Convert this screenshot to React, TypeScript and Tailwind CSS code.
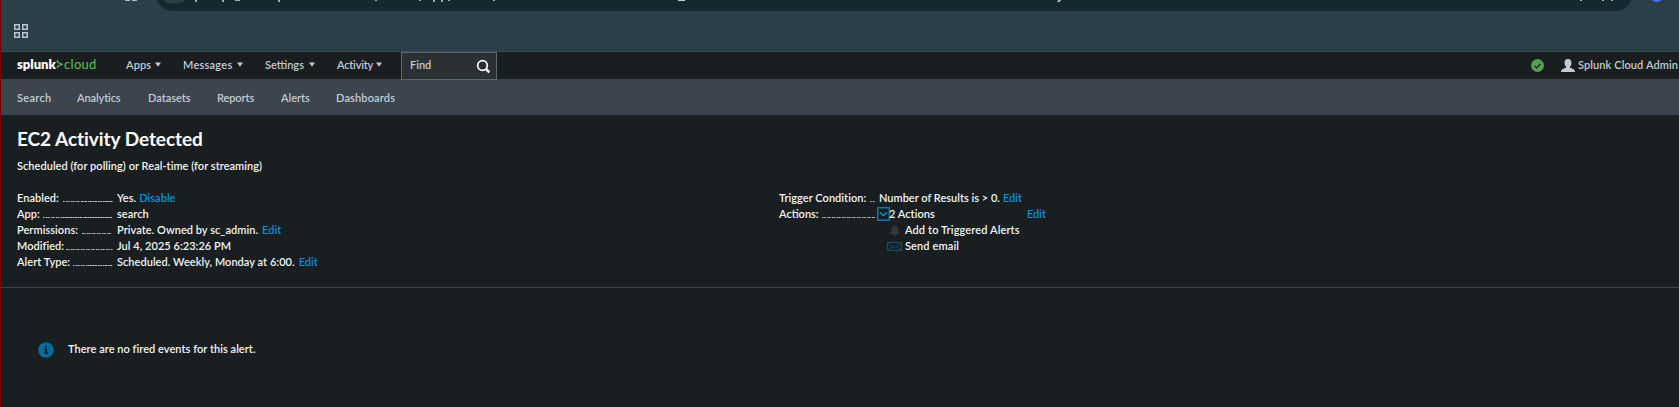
import React from "react";

const fragments: [number, number, number][] = [
  [195, 2, 2], [222, 2, 2], [235, 5, 1], [278, 2, 2], [375, 2, 1], [419, 2, 1], [433, 2, 2],
  [441, 2, 2], [448, 2, 1], [493, 2, 1], [1580, 2, 1], [1602, 2, 1], [1611, 2, 1],
];

function Caret() {
  return <svg className="h-[5px] w-[6px]" viewBox="0 0 6 5"><path d="M0 .5h6L3 4.700z" fill="#c3cbd4" /></svg>;
}

function MenuItem({ label, className }: { label: string; className: string }) {
  return (
    <div className={`flex shrink-0 items-center justify-between whitespace-nowrap ${className}`}>
      <span>{label}</span>
      <Caret />
    </div>
  );
}

function Row({ label, labelClass, dots, children }: { label: string; labelClass: string; dots: string; children: React.ReactNode }) {
  return (
    <div className="flex h-4 items-center whitespace-nowrap">
      <div className="flex w-[100px] shrink-0 items-center">
        <span className={labelClass}>{label}</span>
        <span className={`ml-[3px] mt-[7px] h-px bg-[repeating-linear-gradient(90deg,#c8cacc_0_1px,#70757a_1px_2px,#3a3f43_2px_2.5px)] ${dots}`} />
      </div>
      {children}
    </div>
  );
}

function Link({ children, className = "" }: { children: string; className?: string }) {
  return <a className={`text-[#0f8fdc] ${className}`}>{children}</a>;
}

export default function App() {
  return (
    <div className="h-[407px] w-[1679px] overflow-hidden border-l border-[#7a0000] bg-[#191e21] font-['Lato',sans-serif] text-[11px] font-semibold leading-4 text-[#f2f4f5]">
      <div className="h-[52px] border-b border-[#3b4a50] bg-[#2c3e47]">
        <svg className="block h-[51px] w-[1678px]" viewBox="1 0 1678 51">
          <path d="M157 0C160 7 166 11 174 11H1615C1623 11 1629 6 1631 0Z" fill="#152830" />
          <path d="M163 0a12 6 0 0 0 22 0z" fill="#2c3e47" />
          <path d="M125 0h5v1h-5zM132 0h5v1h-5z" fill="#a8c0cc" />
          {fragments.map(([x, w, h]) => <rect key={x} x={x} y="0" width={w} height={h} fill="#9fadb5" />)}
          <rect x="678" y="0" width="7" height="1" fill="#c3cbd4" />
          <path d="M1058 0h3v1h-1v1h-3v-1h1z" fill="#a8b4bb" />
          <path d="M1652 0h10q-2 2-5 2t-5-2z" fill="#3474ff" />
          <g fill="none" stroke="#b9c7d2" strokeWidth="1.5">
            <path d="M14.75 24.75h4.5v4.5h-4.5zM22.75 24.75h4.5v4.5h-4.5zM14.75 32.75h4.5v4.5h-4.5zM22.75 32.75h4.5v4.5h-4.5z" />
          </g>
        </svg>
      </div>

      <header className="flex h-[27px] items-center pl-4 text-[#c3cbd4]">
        <div className="-mt-[3px] flex w-[81px] shrink-0 items-center whitespace-nowrap text-[13px] leading-[18px]">
          <span className="w-[39px] font-extrabold tracking-[0px] text-white">splunk</span>
          <svg className="h-[10px] w-[8px]" viewBox="0 0 8 10"><path d="M1.500 1v2.200L6 5.200 1.500 7.400V9" fill="none" stroke="#5cc05c" strokeWidth="1.200" /></svg>
          <span className="font-normal tracking-[0.3px] text-[#5cc05c]">cloud</span>
        </div>
        <div className="-mt-[2px] flex">
          <MenuItem label="Apps" className="ml-[28px] w-[35px] tracking-[0.100px]" />
          <MenuItem label="Messages" className="ml-[22px] w-[60px] tracking-[0.250px]" />
          <MenuItem label="Settings" className="ml-[22px] w-[50px]" />
          <MenuItem label="Activity" className="ml-[22px] w-[45px] tracking-[-0.200px]" />
        </div>
        <div className="z-10 ml-[19px] mt-[1px] flex h-[28px] w-[96px] shrink-0 items-center justify-between border border-[#5c6773] bg-[#2b3033] pb-px pl-[8px] pr-[5px]">
          <span className="-mt-[1px]">Find</span>
          <svg className="mt-px h-[15px] w-[15px]" viewBox="0 0 15 15" fill="none" stroke="#fff"><circle cx="6.5" cy="6.5" r="4.8" strokeWidth="1.7" /><path d="M10 10l3.3 3.3" strokeWidth="2.5" /></svg>
        </div>
        <div className="ml-auto flex items-center">
          <svg className="-mt-[1px] h-[13px] w-[13px]" viewBox="0 0 13 13"><circle cx="6.5" cy="6.5" r="6.5" fill="#53a051" /><path d="M3.6 6.8l2 2 4-4" fill="none" stroke="#1a1e22" strokeWidth="1.2" /></svg>
          <svg className="ml-[17px] h-[13px] w-[14px]" viewBox="0 0 14 13"><path d="M7 0c2.4 0 3.5 1.5 3.5 3.7 0 1.7-.6 3-1.5 3.8v1.3c1.800.8 5 1.200 5 4.200H0c0-3 3.200-3.400 5-4.200V7.500C4.100 6.700 3.500 5.400 3.500 3.700 3.500 1.500 4.600 0 7 0z" fill="#c3cbd4" /></svg>
          <span className="-mt-[2px] ml-[3px] w-[101px] whitespace-nowrap tracking-[0.100px]">Splunk Cloud Admin</span>
        </div>
      </header>

      <nav className="flex h-9 items-center whitespace-nowrap bg-[#3c444d] pl-4 pt-px text-[#c3cbd4]">
        <span className="w-[60px] tracking-[0.300px]">Search</span>
        <span className="w-[71px] tracking-[-0.100px]">Analytics</span>
        <span className="w-[69px]">Datasets</span>
        <span className="w-[64px] tracking-[-0.100px]">Reports</span>
        <span className="w-[55px]">Alerts</span>
        <span className="tracking-[0.150px]">Dashboards</span>
      </nav>

      <main>
        <section className="h-[173px] border-b border-[#3c444d] pl-4 pt-[12px]">
          <h1 className="whitespace-nowrap text-[19px] font-bold leading-6 tracking-[-0.050px] text-white">EC2 Activity Detected</h1>
          <p className="mt-[7px] tracking-[0.040px]">Scheduled (for polling) or Real-time (for streaming)</p>
          <div className="mt-4 flex">
            <div className="w-[762px] shrink-0 tracking-[0.040px]">
              <Row label="Enabled:" labelClass="w-[43px]" dots="w-[50px]"><span>Yes.</span><Link className="ml-[3px]">Disable</Link></Row>
              <Row label="App:" labelClass="w-[23px]" dots="w-[69px]"><span>search</span></Row>
              <Row label="Permissions:" labelClass="w-[62px]" dots="w-[30px]"><span>Private. Owned by sc_admin.</span><Link className="ml-[4px]">Edit</Link></Row>
              <Row label="Modified:" labelClass="w-[46px]" dots="w-[47px]"><span>Jul 4, 2025 6:23:26 PM</span></Row>
              <Row label="Alert Type:" labelClass="w-[53px]" dots="w-[40px]"><span>Scheduled. Weekly, Monday at 6:00.</span><Link className="ml-[4px]">Edit</Link></Row>
            </div>
            <div className="w-[280px]">
              <Row label="Trigger Condition:" labelClass="w-[88px] tracking-[0.040px]" dots="w-[5px]"><span>Number of Results is &gt; 0.</span><Link className="ml-[3px]">Edit</Link></Row>
              <Row label="Actions:" labelClass="w-[40px]" dots="w-[53px]">
                <svg className="-ml-[2px] h-[14px] w-[13px] shrink-0" viewBox="0 0 13 14" fill="none" stroke="#0877a6"><path d="M.75.75h11.500v12.500H.75z" strokeWidth="1.5" /><path d="M3 5.500l3.500 3.200L10 5.500" stroke="#159be5" strokeWidth="1.200" /></svg>
                <span className="-ml-px w-[138px] tracking-[0.040px]">2 Actions</span><Link>Edit</Link>
              </Row>
              <div className="flex h-4 items-center pl-[110px]">
                <svg className="h-[11px] w-[11px]" viewBox="0 0 11 11"><path d="M5.500 0c.8 0 1.100.5 1.100 1C8.500 1.600 9 3 9 5c0 1.800.5 2.800 2 4H0c1.500-1.200 2-2.200 2-4 0-2 .5-3.400 2.400-4 0-.5.3-1 1.100-1zM4 9.500h3Q7 11 5.500 11T4 9.500z" fill="#33373a" /></svg>
                <span className="ml-[5px] whitespace-nowrap tracking-[0.120px]">Add to Triggered Alerts</span>
              </div>
              <div className="flex h-4 items-center pl-[108px]">
                <svg className="h-[9px] w-[15px]" viewBox="0 0 15 9" fill="none" stroke="#07547c"><path d="M.5.5h14v8H.5zM1 1l6.500 5L14 1M1 8l4.500-3.500M14 8L9.500 4.500" /></svg>
                <span className="ml-[3px] whitespace-nowrap tracking-[0.120px]">Send email</span>
              </div>
            </div>
          </div>
        </section>
        <section className="flex h-[119px] items-center pl-[37px] pt-[5px]">
          <svg className="h-4 w-4" viewBox="0 0 16 16"><circle cx="8" cy="8" r="7.800" fill="#006d9c" /><path d="M6.800 4h2.200v1.600H6.800zM6 6.700h3v4h1v1.300H6v-1.300h1V8H6z" fill="#1a1e22" /></svg>
          <span className="-mt-[2px] ml-[14px] whitespace-nowrap tracking-[0.040px]">There are no fired events for this alert.</span>
        </section>
      </main>
    </div>
  );
}
